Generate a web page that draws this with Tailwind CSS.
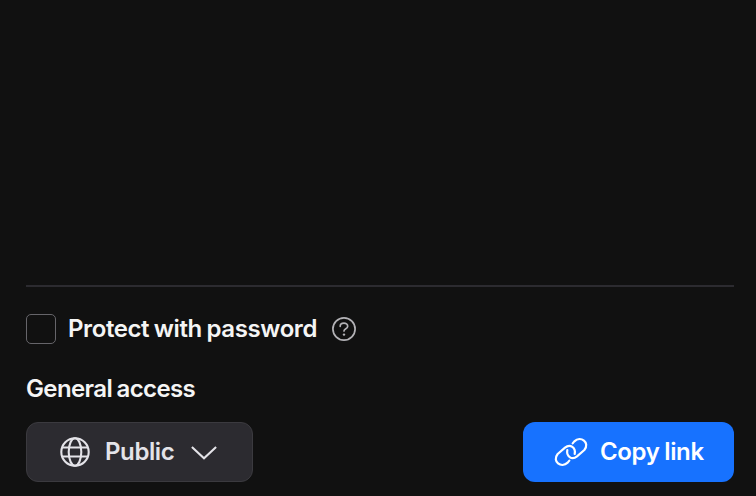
<!DOCTYPE html>
<html lang="en">
<head>
<meta charset="utf-8">
<title>Share</title>
<script src="https://cdn.jsdelivr.net/npm/@tailwindcss/browser@4"></script>
</head>
<body class="bg-[#111111] font-['Inter',sans-serif] text-2xl font-semibold text-[#f5f5f5]">
<main class="flex h-[496px] w-[756px] flex-col justify-end overflow-hidden pr-[22px] pb-3.5 pl-[26px]">
  <hr class="h-0.5 border-0 bg-[#2c2b30]">
  <div class="mt-[27px] flex h-[30px] items-center">
    <span class="size-[30px] shrink-0 rounded-[5px] border border-[#66656a]"></span>
    <span class="ml-3 w-[264px] whitespace-nowrap tracking-[-0.4px] [word-spacing:-1px]">Protect with password</span>
    <svg class="size-[24px] shrink-0 text-[#b3b2b6]" viewBox="0 0 24 24" fill="none" stroke="currentColor" stroke-width="1.7" stroke-linecap="round" stroke-linejoin="round">
      <circle cx="12" cy="12" r="11.1"/>
      <path d="M8.2 9.3C8.2 5 15.7 5 15.7 9.2C15.7 11.9 12 11.5 12 14"/>
      <circle cx="12" cy="17.6" r="1.2" fill="currentColor" stroke="none"/>
    </svg>
  </div>
  <h2 class="mt-[30px] h-[30px] leading-[30px] whitespace-nowrap tracking-[-0.62px] [word-spacing:-1px]">General access</h2>
  <div class="mt-[18px] flex justify-between">
    <button class="flex h-[60px] w-[227px] items-center rounded-xl border border-[#3b3a3f] bg-[#2c2b30] pl-[33px] text-[#e4e3e8]">
      <svg class="size-[30px] shrink-0" viewBox="0 0 30 30" fill="none" stroke="currentColor" stroke-width="2.1">
        <circle cx="15" cy="15" r="13.7"/>
        <ellipse cx="15" cy="15" rx="6.3" ry="13.7"/>
        <path d="M2 10.5H28M2 19.5H28"/>
      </svg>
      <span class="ml-[15px] w-[85px] text-left tracking-[-0.4px]">Public</span>
      <svg class="h-4 w-7 shrink-0" viewBox="0 0 28 16" fill="none" stroke="currentColor" stroke-width="2.1"><path d="M1.9 3L14 14.3L26.1 3"/></svg>
    </button>
    <button class="flex h-[60px] w-[211px] items-center rounded-xl bg-[#1772ff] pl-[31px] text-white">
      <svg class="h-[30px] w-[34px] shrink-0" viewBox="117 75 102 90" fill="none" stroke="currentColor" stroke-width="6.6" stroke-linecap="round" stroke-linejoin="round">
        <path d="M173 94L178 88C197 71 226 91 208 114L186 133C170 146 153 132 157 114"/>
        <path d="M163 146L158 152C139 169 110 149 128 126L150 107C166 94 183 108 179 126"/>
      </svg>
      <span class="ml-3 whitespace-nowrap tracking-[-0.35px] [word-spacing:-1px]">Copy link</span>
    </button>
  </div>
</main>
</body>
</html>
